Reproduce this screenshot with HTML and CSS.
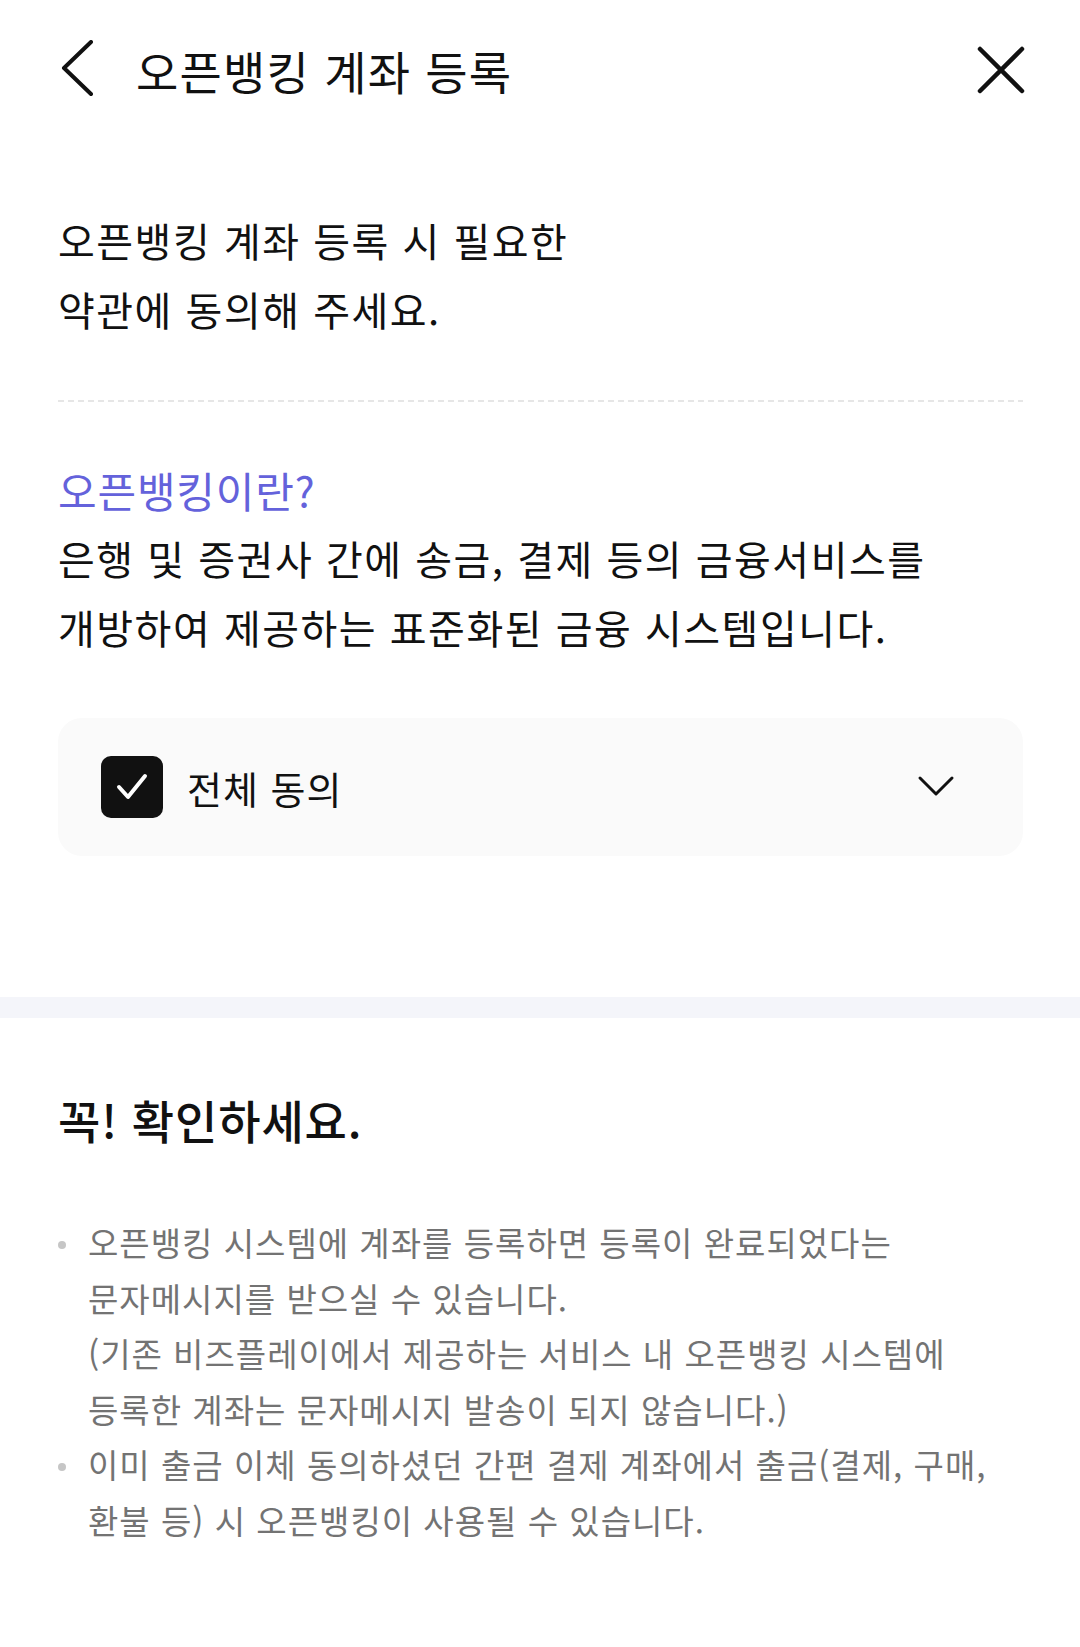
FILE: index.html
```html
<!DOCTYPE html>
<html lang="ko">
<head>
    <meta charset="UTF-8">
    <meta name="viewport" content="width=device-width, initial-scale=1.0">
    <title>오픈뱅킹 계좌 등록</title>
    <link rel="stylesheet" href="styles.css">
</head>
<body>
    <div class="page">
        <header class="top-bar">
            <button class="icon-btn back-btn" aria-label="뒤로">
                <svg width="40" height="60" viewBox="0 0 40 60">
                    <path d="M30 2 L3 28 L30 54" fill="none" stroke="#111" stroke-width="4" stroke-linecap="round" stroke-linejoin="round"/>
                </svg>
            </button>
            <h1 class="top-title">오픈뱅킹 계좌 등록</h1>
            <button class="icon-btn close-btn" aria-label="닫기">
                <svg width="48" height="48" viewBox="0 0 48 48">
                    <path d="M3 3 L45 45 M45 3 L3 45" fill="none" stroke="#111" stroke-width="4.5" stroke-linecap="round"/>
                </svg>
            </button>
        </header>

        <section class="intro">
            <h2 class="intro-title">오픈뱅킹 계좌 등록 시 필요한<br>약관에 동의해 주세요.</h2>

            <div class="divider"></div>

            <div class="about">
                <h3 class="about-title">오픈뱅킹이란?</h3>
                <p class="about-text">은행 및 증권사 간에 송금, 결제 등의 금융서비스를 개방하여 제공하는 표준화된 금융 시스템입니다.</p>
            </div>

            <div class="agree-box">
                <span class="check-box">
                    <svg width="34" height="30" viewBox="0 0 34 30">
                        <path d="M4 15 L13 25 L30 4" fill="none" stroke="#fff" stroke-width="4" stroke-linecap="round" stroke-linejoin="round"/>
                    </svg>
                </span>
                <span class="agree-label">전체 동의</span>
                <svg class="agree-arrow" width="38" height="24" viewBox="0 0 38 24">
                    <path d="M3 3 L19 19 L35 3" fill="none" stroke="#111" stroke-width="3" stroke-linecap="round" stroke-linejoin="round"/>
                </svg>
            </div>
        </section>

        <div class="band"></div>

        <section class="notice">
            <h2 class="notice-title">꼭! 확인하세요.</h2>
            <ul class="notice-list">
                <li>오픈뱅킹 시스템에 계좌를 등록하면 등록이 완료되었다는 문자메시지를 받으실 수 있습니다.<br>(기존 비즈플레이에서 제공하는 서비스 내 오픈뱅킹 시스템에 등록한 계좌는 문자메시지 발송이 되지 않습니다.)</li>
                <li>이미 출금 이체 동의하셨던 간편 결제 계좌에서 출금(결제, 구매, 환불 등) 시 오픈뱅킹이 사용될 수 있습니다.</li>
            </ul>
        </section>
    </div>
</body>
</html>
```

FILE: styles.css
```css
* {
    margin: 0;
    padding: 0;
    box-sizing: border-box;
}

body {
    background: #fff;
    color: #111;
    font-family: "Noto Sans CJK KR", "Noto Sans", sans-serif;
    word-break: keep-all;
}

.page {
    width: 1080px;
}

/* top bar */
.top-bar {
    height: 140px;
    display: flex;
    align-items: center;
    padding: 0 55px 0 61px;
}

.icon-btn {
    background: none;
    border: none;
    display: flex;
    align-items: center;
    justify-content: center;
    cursor: pointer;
}

.back-btn svg {
    display: block;
}

.top-title {
    margin-left: 35px;
    font-size: 46px;
    font-weight: 400;
    letter-spacing: 1.2px;
    flex: 1;
}

/* intro */
.intro {
    padding: 0 57px 0 58px;
}

.intro-title {
    margin-top: 66px;
    font-size: 40px;
    font-weight: 400;
    line-height: 69px;
    letter-spacing: 1.5px;
}

.divider {
    margin-top: 56px;
    height: 2px;
    background: repeating-linear-gradient(to right, #e6e6e6 0 6px, transparent 6px 10px);
}

.about {
    margin-top: 53px;
    font-size: 40px;
    line-height: 69px;
    letter-spacing: 1.5px;
}

.about-title {
    font-size: 42px;
    font-weight: 400;
    letter-spacing: 0.8px;
    color: #6462db;
}

.agree-box {
    margin-top: 56px;
    height: 138px;
    background: #fafafa;
    border-radius: 24px;
    display: flex;
    align-items: center;
    padding: 0 68px 0 43px;
}

.check-box {
    width: 62px;
    height: 62px;
    border-radius: 10px;
    background: #111;
    display: flex;
    align-items: center;
    justify-content: center;
}

.agree-label {
    margin-left: 24px;
    font-size: 38px;
    letter-spacing: 1px;
    flex: 1;
}

/* divider band */
.band {
    margin-top: 141px;
    height: 21px;
    background: #f4f5fa;
}

/* notice */
.notice {
    padding: 0 57px 0 58px;
}

.notice-title {
    margin-top: 71px;
    font-size: 46px;
    font-weight: 500;
    line-height: 60px;
    letter-spacing: 0.9px;
}

.notice-list {
    list-style: none;
    margin-top: 66px;
    font-size: 33px;
    line-height: 55.5px;
    letter-spacing: 1px;
    color: #737373;
}

.notice-list li {
    position: relative;
    padding-left: 30px;
}

.notice-list li::before {
    content: "";
    position: absolute;
    left: 0;
    top: 26px;
    width: 8px;
    height: 8px;
    border-radius: 50%;
    background: #c6c6c6;
}
```
